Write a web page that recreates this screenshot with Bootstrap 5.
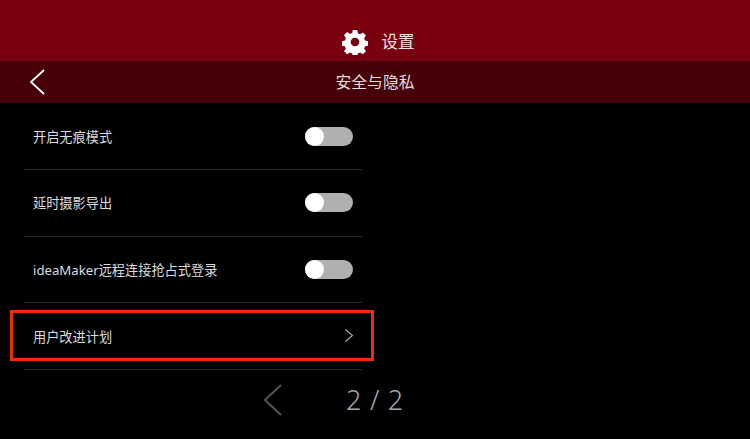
<!DOCTYPE html>
<html lang="zh">
<head>
<meta charset="utf-8">
<title>设置</title>
<link href="https://cdn.jsdelivr.net/npm/bootstrap@5.3.0/dist/css/bootstrap.min.css" rel="stylesheet">
<style>
html, body { width: 750px; height: 439px; overflow: hidden; background: #000; }
body { font-family: "Noto Sans", "Noto Sans CJK SC", sans-serif; color: #e6e6e6; }
.head-bar { height: 61px; background: #79000f; padding-top: 24px; padding-left: 6px; color: #f0e0e2; font-size: 16.500px; gap: 14px; }
.head-bar svg { width: 26px; height: 26px; margin-top: -2px; }
.sub-bar { height: 42px; background: #470008; font-size: 15.800px; color: #e4dcdc; }
.sub-bar .sub-title { padding-top: 2px; }
.sub-bar .back-btn { position: absolute; left: 29px; top: 8px; }
.set-list { width: 338px; margin-left: 24px; padding-top: .4px; }
.set-row { height: 66.600px; border-bottom: 1px solid #2c2c2c; padding-left: 9px; padding-right: 9px; font-size: 13.200px; color: #dcdcdc; }
.row-text { padding-top: 3px; }
.tog { width: 48px; height: 19px; border-radius: 10px; background: #b0b0b0; position: relative; }
.tog::before { content: ""; position: absolute; left: 0; top: 0; width: 19px; height: 19px; border-radius: 50%; background: #fff; }
.mark-box { position: absolute; left: 10px; top: 310px; width: 364px; height: 51px; border: 3px solid #f32c00; pointer-events: none; }
.pager { font-size: 27px; color: #a8a8a8; height: 60px; padding-left: 263px; padding-top: 1px; }
.pager-num { margin-left: 64px; word-spacing: 1.500px; font-weight: 300; }
.row-arrow { margin-top: -1px; }
</style>
</head>
<body>
<header class="head-bar d-flex align-items-center justify-content-center">
  <svg viewBox="0 0 24 24" fill="#fff" aria-hidden="true"><path fill-rule="evenodd" d="M10 1h4l.6 3a8.300 8.300 0 0 1 2.100.9l2.600-1.700 2.800 2.800-1.700 2.600c.4.7.7 1.400.9 2.100l3 .6v4l-3 .6a8.300 8.300 0 0 1-.9 2.100l1.700 2.600-2.800 2.800-2.600-1.700c-.7.4-1.400.7-2.100.9l-.6 3h-4l-.6-3a8.300 8.300 0 0 1-2.100-.9l-2.600 1.700-2.800-2.800 1.700-2.600a8.300 8.300 0 0 1-.9-2.100l-3-.6v-4l3-.6c.2-.7.5-1.400.9-2.100L1.900 5.600 4.700 2.800l2.600 1.700c.7-.4 1.400-.7 2.100-.9zM12 8a4 4 0 1 0 0 8 4 4 0 0 0 0-8z"/></svg>
  <span>设置</span>
</header>
<div class="sub-bar d-flex align-items-center justify-content-center position-relative">
  <svg class="back-btn" width="16" height="26" viewBox="0 0 16 26" fill="none" stroke="#fff" stroke-width="1.800" aria-hidden="true"><path d="M15 1 2 13 15 25"/></svg>
  <span class="sub-title">安全与隐私</span>
</div>
<main class="set-list">
  <div class="set-row d-flex align-items-center justify-content-between"><span class="row-text">开启无痕模式</span><span class="tog"></span></div>
  <div class="set-row d-flex align-items-center justify-content-between"><span class="row-text">延时摄影导出</span><span class="tog"></span></div>
  <div class="set-row d-flex align-items-center justify-content-between"><span class="row-text">ideaMaker远程连接抢占式登录</span><span class="tog"></span></div>
  <div class="set-row d-flex align-items-center justify-content-between"><span class="row-text">用户改进计划</span>
    <svg class="row-arrow" width="8" height="13" viewBox="0 0 8 13" fill="none" stroke="#b0b0b0" stroke-width="1.100" aria-hidden="true"><path d="M.5 .5 7.500 6.500 .5 12.500"/></svg>
  </div>
</main>
<div class="mark-box"></div>
<nav class="pager d-flex align-items-center">
  <svg width="19" height="32" viewBox="0 0 19 32" fill="none" stroke="#555" stroke-width="2" aria-hidden="true"><path d="M18 1 2 16 18 31"/></svg>
  <span class="pager-num">2 / 2</span>
</nav>
<script src="https://cdn.jsdelivr.net/npm/bootstrap@5.3.0/dist/js/bootstrap.bundle.min.js"></script>
</body>
</html>
